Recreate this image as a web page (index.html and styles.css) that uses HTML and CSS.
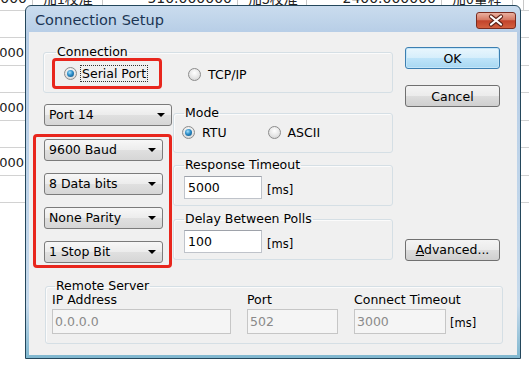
FILE: index.html
```html
<!DOCTYPE html>
<html lang="zh-CN">
<head>
  <meta charset="UTF-8">
  <title>Connection Setup</title>
  <link rel="stylesheet" href="styles.css">
</head>
<body>
  <!-- grid of the program behind the dialog -->
  <div class="sheet">
    <div class="row head">
      <span class="cell w1 num">0000</span>
      <span class="cell w2">加1校准</span>
      <span class="cell w3 num">510.000000</span>
      <span class="cell w4">加5校准</span>
      <span class="cell w3 num">2400.000000</span>
      <span class="cell w5">加0量程</span>
      <span class="cell"></span>
    </div>
    <div class="row"></div>
    <div class="row"><span class="cell w1 num val">1.000</span></div>
    <div class="row"></div>
    <div class="row"><span class="cell w1 num val">1.000</span></div>
    <div class="row"></div>
    <div class="row"><span class="cell w1 num val">1.000</span></div>
    <div class="row"></div>
  </div>

  <!-- DIALOG -->
  <div class="dialog">
    <div class="titlebar">
      <span class="title">Connection Setup</span>
      <span class="close">
        <svg width="38" height="15" viewBox="0 0 38 15">
          <path d="M14 3.5 L24 11.5 M24 3.5 L14 11.5" stroke="#5b2016" stroke-width="4.2" stroke-linecap="round"/>
          <path d="M14 3.5 L24 11.5 M24 3.5 L14 11.5" stroke="#fff" stroke-width="2.2" stroke-linecap="round"/>
        </svg>
      </span>
    </div>

    <div class="content">
      <div class="top">
        <div class="main">
          <fieldset class="group conn">
            <legend>Connection</legend>
            <div class="conn-row">
              <span class="mark serial">
                <span class="radio on"></span>
                <span class="focus">Serial Port</span>
              </span>
              <span class="opt tcp"><span class="radio"></span><span>TCP/IP</span></span>
            </div>
          </fieldset>

          <div class="lower">
            <div class="combos">
              <div class="combo port">Port 14</div>
              <div class="mark stack">
                <div class="combo">9600 Baud</div>
                <div class="combo">8 Data bits</div>
                <div class="combo">None Parity</div>
                <div class="combo">1 Stop Bit</div>
              </div>
            </div>

            <div class="settings">
              <fieldset class="group mode">
                <legend>Mode</legend>
                <div class="mode-row">
                  <span class="opt"><span class="radio on"></span><span>RTU</span></span>
                  <span class="opt ascii"><span class="radio"></span><span>ASCII</span></span>
                </div>
              </fieldset>
              <fieldset class="group">
                <legend>Response Timeout</legend>
                <div class="field">
                  <span class="tbox">5000</span>
                  <span class="unit">[ms]</span>
                </div>
              </fieldset>
              <fieldset class="group">
                <legend>Delay Between Polls</legend>
                <div class="field">
                  <span class="tbox">100</span>
                  <span class="unit">[ms]</span>
                </div>
              </fieldset>
            </div>
          </div>
        </div>

        <div class="buttons">
          <button class="btn ok" type="button">OK</button>
          <button class="btn cancel" type="button">Cancel</button>
          <button class="btn advanced" type="button"><u>A</u>dvanced...</button>
        </div>
      </div>

      <fieldset class="group remote">
        <legend>Remote Server</legend>
        <div class="remote-row">
          <div class="col ip">
            <span class="lbl">IP Address</span>
            <span class="tbox off">0.0.0.0</span>
          </div>
          <div class="col rport">
            <span class="lbl">Port</span>
            <span class="tbox off">502</span>
          </div>
          <div class="col rtime">
            <span class="lbl">Connect Timeout</span>
            <div class="field">
              <span class="tbox off">3000</span>
              <span class="unit">[ms]</span>
            </div>
          </div>
        </div>
      </fieldset>
    </div>
  </div>
</body>
</html>
```

FILE: styles.css
```css
* {
  box-sizing: border-box;
}

body {
  margin: 0;
  height: 383px;
  overflow: hidden;
  background-color: #fff;
  font-family: "DejaVu Sans", "Noto Sans CJK SC", sans-serif;
  font-size: 12.5px;
  color: #000;
}

/* table behind */
.sheet {
  margin: -17px 0 0 -40px;
  width: 600px;
}

.row {
  display: flex;
  height: 27.5px;
  border-bottom: 1px solid #d2d2d2;
}

.cell {
  display: flex;
  align-items: center;
  padding: 3px 0 0 10px;
  border-right: 1px solid #c8c8c8;
  color: #222;
  font-size: 14px;
  font-family: "Noto Sans CJK SC", "DejaVu Sans", sans-serif;
}

.cell.num {
  justify-content: flex-end;
  padding: 3px 5px 0 0;
  font-family: "DejaVu Sans", sans-serif;
}

.w1 { width: 73px; }
.w2 { width: 70px; }
.w3 { width: 135px; }
.w4 { width: 69px; }
.w5 { width: 71px; }

.cell.val {
  padding: 2px 9px 0 0;
  border-right: none;
  font-size: 13px;
}

/* dialog window */
.dialog {
  position: absolute;
  left: 25px;
  top: 5px;
  width: 496px;
  height: 354px;
  display: flex;
  flex-direction: column;
  padding: 0 3px 3px;
  border: 1px solid #24475c;
  border-radius: 6px 6px 0 0;
  background: linear-gradient(#cadcee, #b6cde6 28px, #c6daec 85%, #7fb7cf);
}

.titlebar {
  height: 26px;
  display: flex;
  align-items: flex-start;
  justify-content: space-between;
  padding: 0 1px 0 6px;
}

.title {
  margin-top: 6px;
  font-size: 14.5px;
  color: #1b3554;
}

.close {
  margin-top: 6px;
  width: 40px;
  height: 17px;
  display: flex;
  align-items: center;
  justify-content: center;
  border: 1px solid #7a2c20;
  border-radius: 3px;
  background: linear-gradient(#eab0a0, #d57a65 45%, #c2432b 52%, #d3603f);
}

.content {
  flex: 1;
  background-color: #f0f0f0;
  padding: 12px 0 0 4px;
}

.top {
  display: flex;
  gap: 12px;
}

.main {
  width: 360px;
}

/* group boxes */
.group {
  margin: 0;
  min-width: 0;
  padding: 0 8px;
  border: 1px solid #d5dfe5;
  border-radius: 3px;
  box-shadow: inset 1px 1px 0 #fbfbfb;
}

.group legend {
  padding: 0 1px 2px;
  margin-left: 2px;
  line-height: 15px;
}

.conn {
  margin-left: 10px;
  padding-bottom: 3px;
}

.conn legend {
  margin-left: 4px;
}

.conn-row {
  display: flex;
  align-items: center;
}

.mark {
  border: 3px solid #e8261d;
  border-radius: 4px;
}

.serial {
  margin-top: -3.5px;
  width: 110px;
  height: 31px;
  display: flex;
  align-items: center;
  padding-left: 9px;
}

.focus {
  margin-left: 3px;
  padding: 1px 1px;
  line-height: 13px;
  border: 1px dotted #333;
}

.opt {
  display: flex;
  align-items: center;
  gap: 7px;
}

.tcp {
  margin-left: 26px;
}

.radio {
  flex: none;
  width: 13px;
  height: 13px;
  display: inline-flex;
  align-items: center;
  justify-content: center;
  border: 1px solid #8c8c8c;
  border-radius: 50%;
  background: radial-gradient(circle at 50% 35%, #fff, #e6e6e6 55%, #cdcdcd);
}

.radio.on::after {
  content: "";
  width: 7px;
  height: 7px;
  border-radius: 50%;
  background: radial-gradient(circle at 40% 35%, #a6e0fa, #2b8cc8 45%, #0b4a78);
}

.lower {
  display: flex;
  gap: 1px;
  margin-top: 11px;
}

.combos {
  width: 139px;
}

.combo {
  height: 22px;
  display: flex;
  align-items: center;
  justify-content: space-between;
  padding: 0 6px 0 4px;
  border: 1px solid #7b7b7b;
  border-radius: 3px;
  background: linear-gradient(#f7f7f7, #ececec 50%, #e0e0e0 50%, #d6d6d6);
}

.combo::after {
  content: "";
  border-left: 4.5px solid transparent;
  border-right: 4.5px solid transparent;
  border-top: 4px solid #000;
}

.port {
  margin-left: 11px;
}

.stack {
  margin-top: 8px;
  padding: 2px 6px 2px 8px;
  display: flex;
  flex-direction: column;
  gap: 12px;
}

.settings {
  width: 220px;
  display: flex;
  flex-direction: column;
  gap: 4.5px;
  margin-top: 1.5px;
}

.mode {
  padding-bottom: 8.5px;
}

.mode-row {
  height: 21px;
  display: flex;
  align-items: center;
}

.ascii {
  margin-left: 41px;
}

.field {
  display: flex;
  align-items: center;
  margin-top: 2px;
  padding-bottom: 6px;
}

.tbox {
  width: 78px;
  height: 23px;
  display: flex;
  align-items: center;
  margin-left: 2px;
  padding-left: 3px;
  background-color: #fff;
  border: 1px solid #bfc3ca;
  border-top-color: #9ea2aa;
}

.unit {
  margin: 5px 0 0 5px;
  font-size: 11.5px;
}

/* buttons */
.buttons {
  width: 95px;
  display: flex;
  flex-direction: column;
  padding: 3px 0 7px;
}

.btn {
  height: 22px;
  padding: 0;
  font-family: "DejaVu Sans", sans-serif;
  font-size: 12.5px;
  color: #000;
  border: 1px solid #707070;
  border-radius: 3px;
  background: linear-gradient(#f4f4f4, #ebebeb 50%, #dddddd 50%, #cfcfcf);
}

.ok {
  border-color: #3c7fb1;
  background: linear-gradient(#e9f6fd, #d6eefb 50%, #bfe4f9 50%, #a8d8f2);
  box-shadow: inset 0 0 0 1px #c4e6f9;
}

.cancel {
  margin-top: 16px;
}

.advanced {
  margin-top: auto;
}

/* remote server */
.remote {
  margin: 10.5px 14px 0 12px;
  padding: 0 6px 9px;
}

.remote legend {
  margin-left: 3px;
}

.remote-row {
  display: flex;
  gap: 16px;
}

.col {
  display: flex;
  flex-direction: column;
  gap: 1.5px;
}

.lbl {
  margin-top: -2px;
  line-height: 14px;
}

.col .tbox {
  margin-left: 0;
  height: 25px;
  padding-left: 2px;
}

.tbox.off {
  color: #8a8a8a;
  background-color: #f5f5f5;
  border-color: #c6c6c6;
}

.ip .tbox { width: 179px; }
.rport .tbox { width: 91px; }
.rtime .tbox { width: 92px; }

.rtime .field {
  margin: 0;
  padding: 0;
}

.rtime .unit {
  margin: 3px 0 0 4px;
}
```
